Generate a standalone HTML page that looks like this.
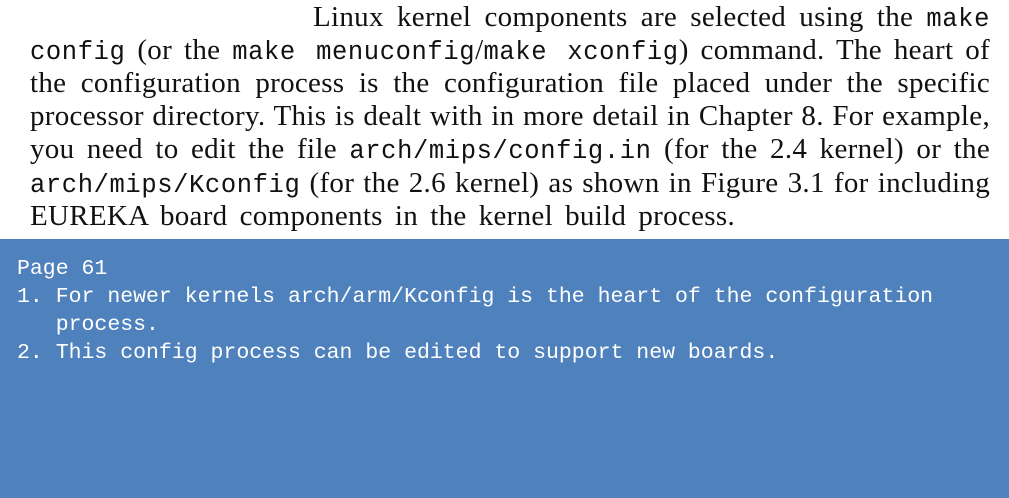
<!DOCTYPE html>
<html><head><meta charset="utf-8"><style>
html,body{margin:0;padding:0;width:1009px;height:498px;overflow:hidden;background:#fff;position:relative}
.l{position:absolute;left:30px;width:960px;font:29px/33px "Liberation Serif",serif;letter-spacing:0.3px;color:#111;text-align:justify;text-align-last:justify;white-space:nowrap}
.m{font-family:"Liberation Mono",monospace;font-size:25.5px;letter-spacing:0.6px}
.box{position:absolute;left:0;top:239px;width:1009px;height:259px;background:#4f81bd;color:#fff;font:21.5px/28px "Liberation Mono",monospace}
.box div{position:absolute;left:17px;white-space:pre}
</style></head><body>
<div class="l" style="left:313px;width:677px;top:1px">Linux kernel components are selected using the <span class="m">make</span></div>
<div class="l" style="top:34px"><span class="m">config</span> (or the <span class="m">make menuconfig</span>/<span class="m">make xconfig</span>) command. The heart of</div>
<div class="l" style="top:67px">the configuration process is the configuration file placed under the specific</div>
<div class="l" style="top:100px">processor directory. This is dealt with in more detail in Chapter 8. For example,</div>
<div class="l" style="top:133px">you need to edit the file <span class="m">arch/mips/config.in</span> (for the 2.4 kernel) or the</div>
<div class="l" style="top:167px"><span class="m">arch/mips/Kconfig</span> (for the 2.6 kernel) as shown in Figure 3.1 for including</div>
<div class="l" style="top:200px;width:705px">EUREKA board components in the kernel build process.</div>
<div class="box">
<div style="top:16px">Page 61</div>
<div style="top:44px">1. For newer kernels arch/arm/Kconfig is the heart of the configuration</div>
<div style="top:72px">   process.</div>
<div style="top:100px">2. This config process can be edited to support new boards.</div>
</div>
</body></html>
